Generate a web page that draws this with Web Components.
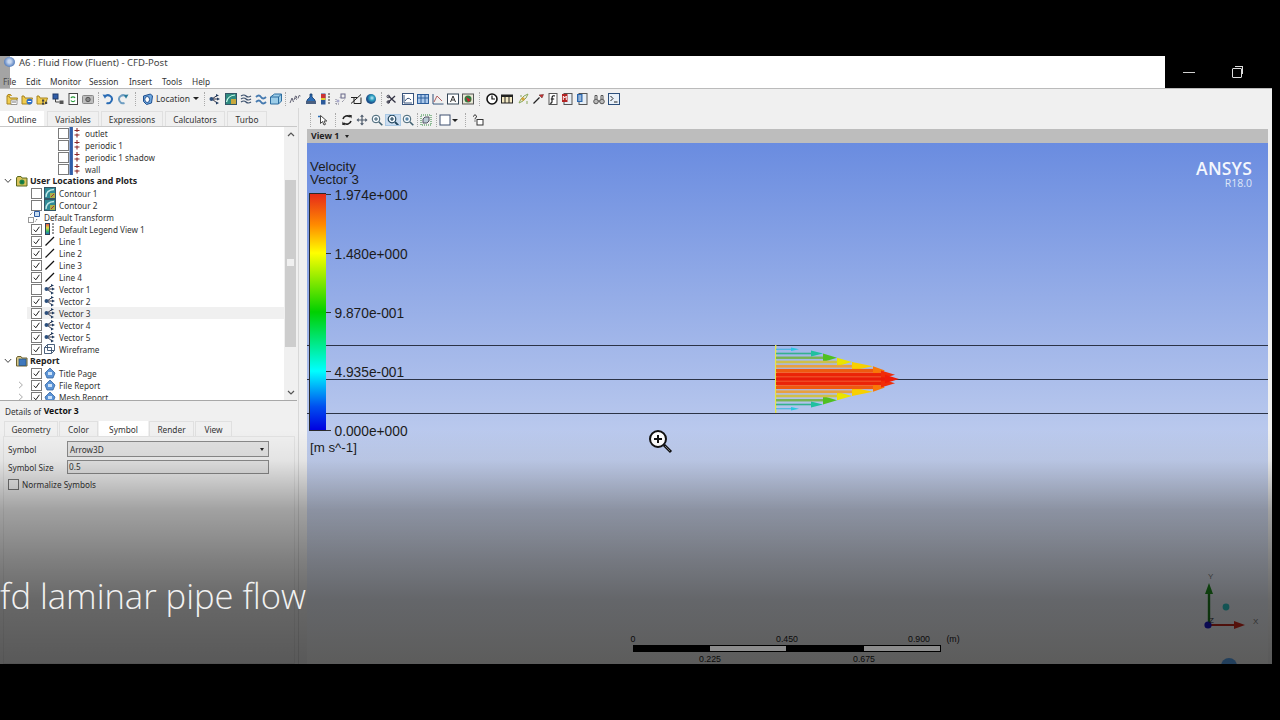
<!DOCTYPE html>
<html lang="en"><head><meta charset="utf-8"><title>CFD-Post</title>
<style>html,body{margin:0;padding:0;background:#000;overflow:hidden}</style></head>
<body>
<cfd-frame>
  <cfd-titlebar slot="title" title-text="A6 : Fluid Flow (Fluent) - CFD-Post"></cfd-titlebar>
  <cfd-maintools slot="tools"></cfd-maintools>
  <cfd-outline slot="left"></cfd-outline>
  <cfd-view slot="right"></cfd-view>
</cfd-frame>
<script>
const UI='"Noto Sans","Liberation Sans",sans-serif';
const doc=(c='#fff')=>`<rect x="2" y=".5" width="8" height="11" fill="${c}" stroke="#555"/>`;
const ICONS={
boundary:`<rect x=".5" y="0" width="3.4" height="12" fill="#2f5da8"/><path d="M5.5 3.5h5M5.5 8h5M8 1v4M8 6.5v4" stroke="#8c2a2a" stroke-width="1.1" fill="none"/>`,
contour:`<rect x=".5" y=".5" width="11" height="11" fill="#2f8a96" stroke="#356"/><path d="M2 10Q2 3 10 2.5" stroke="#bfe8e8" stroke-width="1.3" fill="none"/><rect x="6" y="6" width="5" height="5" fill="#a9b04a"/><path d="M7 10l3-3" stroke="#a33"/>`,
legend:`<rect x="1.5" y=".5" width="4" height="11" fill="url(#lg)" stroke="#345"/><defs><linearGradient id="lg" x2="0" y2="1"><stop stop-color="#e44"/><stop offset=".4" stop-color="#dd4"/><stop offset=".7" stop-color="#3b6"/><stop offset="1" stop-color="#26c"/></linearGradient></defs><path d="M8 1h2M8 4h2M8 7h2M8 10h2" stroke="#333" stroke-width="1.2"/>`,
line:`<path d="M1.5 10.5L10 2" stroke="#111" stroke-width="1.2" fill="none"/>`,
vector:`<path d="M3 6L8 2.5M3 6L8 6M3 6L8 10" stroke="#334" fill="none"/><circle cx="2.5" cy="6" r="2" fill="#2c4f7c"/><path d="M7 1l3 1.4-3 1.4zM8 4.6l3 1.4-3 1.4zM7 8.6l3 1.4-3 1.4z" fill="#1f3a5f"/>`,
wire:`<path d="M.5 4.5h7v6h-7zM.5 4.5l3-3h7v6l-3 3M3.5 1.5v6h7" stroke="#39506e" fill="none" stroke-width=".9"/>`,
report:`<path d="M1 6l5-5 5 5-2 5H3z" fill="#5b93d6" stroke="#35669f" stroke-width=".8"/><rect x="4" y="5" width="4" height="3" fill="#cfe3f7"/>`,
transform:`<path d="M.5 6.5h5v5h-5z" fill="none" stroke="#333" stroke-dasharray="1 1"/><path d="M6.5.5h5v5h-5z" fill="#c9ddf0" stroke="#2c5aa0"/><path d="M2 4L5 1M9 8l-2 3" stroke="#555" stroke-dasharray="1 1"/>`,
folderUser:`<path d="M.5 3V11h10.5V3H6L5 1.5H1.5z" fill="#d9c25a" stroke="#5b6a20"/><circle cx="6" cy="7" r="2.6" fill="#2f8d48"/><rect x="4.5" y="5.5" width="3" height="3" fill="#174"/>`,
folderRep:`<path d="M.5 3V11h10.5V3H6L5 1.5H1.5z" fill="#d7c789" stroke="#6c6130"/><rect x="3" y="4" width="7" height="6.5" fill="#3f78bd" stroke="#24507f" stroke-width=".7"/>`,
f1:`<path d="M1 3V11h8.5L11.5 5H4L3 3z" fill="#f1cd4e" stroke="#a78420"/><path d="M1 3l1-1.5h2.5L5.5 3" fill="#e8b93a" stroke="#a78420"/><path d="M5 7h6v4.5H5z" fill="#fff" stroke="#777" stroke-width=".7"/><path d="M6 9h4" stroke="#777"/>`,
f2:`<path d="M1 3V11h8.5L11.5 5H4L3 3z" fill="#f1cd4e" stroke="#a78420"/><circle cx="8.5" cy="8.5" r="3" fill="#2f6fc7"/><path d="M6.8 8.5h3.4" stroke="#fff"/>`,
f3:`<path d="M1 3V11h8.5L11.5 5H4L3 3z" fill="#f1cd4e" stroke="#a78420"/><rect x="6" y="6.5" width="2.2" height="2.2" fill="#444"/><rect x="9" y="8.8" width="2.2" height="2.2" fill="#444"/><rect x="6" y="9.6" width="2" height="2" fill="#444"/>`,
nodes:`<rect x="1" y="1" width="5" height="5" fill="#2f5da8" stroke="#1f3a6a"/><rect x="7.5" y="7.5" width="4" height="3.5" fill="#555"/><path d="M3.5 6v3h4" stroke="#444" fill="none"/>`,
refresh:`<rect x="2" y=".5" width="8.5" height="11" fill="#fff" stroke="#444"/><path d="M4 5a2.3 2.3 0 0 1 4 0M8 7.5a2.3 2.3 0 0 1-4 0" stroke="#2a9a3c" stroke-width="1.3" fill="none"/>`,
camera:`<rect x=".5" y="2.5" width="11" height="8" rx="1" fill="#bdbdbd" stroke="#888"/><circle cx="6" cy="6.5" r="2.2" fill="#888" stroke="#555"/>`,
undo:`<path d="M3 3.5a4 4 0 1 1 1.5 6.5" stroke="#2a6cb5" stroke-width="2" fill="none"/><path d="M.5 1.5l4.5.5-2 3.8z" fill="#2a6cb5"/>`,
redo:`<path d="M9 3.5a4 4 0 1 0-1.5 6.5" stroke="#6f9ec2" stroke-width="2" fill="none"/><path d="M11.5 1.5L7 2l2 3.8z" fill="#2a7a9a"/>`,
location:`<path d="M2.5 3l7-2 2 2-1 7-5 1.5-3-3z" fill="#6fa8e0" stroke="#1f4f8f"/><ellipse cx="6.2" cy="6.5" rx="2.4" ry="3" fill="#fff" stroke="#1f4f8f"/>`,
contour2:`<rect x=".5" y=".5" width="11" height="11" fill="#2e8a7f" stroke="#356"/><path d="M1.5 9Q3 2.5 10 2" stroke="#cfe" fill="none" stroke-width="1.2"/><rect x="6" y="6" width="5" height="5" fill="#c8a83c"/>`,
stream:`<path d="M1 3q3-2 5 0t5 0M1 6q3-2 5 0t5 0M1 9q3-2 5 0t5 0" stroke="#3a4f6c" fill="none" stroke-width="1.2"/>`,
ribbon:`<path d="M1 4q3-3 5 0t5 0M1 9q3-3 5 0t5 0" stroke="#467ab0" fill="none" stroke-width="1.8"/>`,
cube:`<path d="M.5 4l4-3h7v7l-3 3h-8z" fill="#9ccde8" stroke="#2c6da0"/><path d="M.5 4h8v7M8.5 4l3-3" stroke="#2c6da0" fill="none"/>`,
abc:`<path d="M1 10l2-5 1.5 4M5 7l1.5-4 1.5 1-1.5 1.5 1.5 1M9 5.5l1-3 1.5.5" stroke="#667" fill="none"/>`,
flask:`<path d="M5 1h2v3l3 3v3H2V7l3-3z" fill="#2b6cb5" stroke="#143a6a" stroke-width=".8"/><rect x="1" y="8" width="10" height="3" fill="#4a5f80"/>`,
legend2:`<rect x="1" y=".5" width="4.5" height="11" fill="#2b5a9a"/><rect x="1" y="1" width="4.5" height="4" fill="#c33"/><rect x="1" y="5" width="4.5" height="2" fill="#dc3"/><path d="M8 1h2M8 4h2M8 7h2M8 10h2" stroke="#333" stroke-width="1.2"/>`,
dots:`<path d="M1 11V5M1 11h4M5 4.5l1.5-1.5M7 9l3-3" stroke="#778" fill="none" stroke-dasharray="1 1"/><rect x="6" y="1" width="4" height="4" fill="none" stroke="#668"/><circle cx="3" cy="8" r="1.5" fill="#aac"/>`,
flag:`<path d="M1 10.5L11 1.5" stroke="#222"/><path d="M1 4.5h6M4 4.5v6h7V4.5" stroke="#222" fill="none"/>`,
ball:`<circle cx="6" cy="6" r="5" fill="url(#bb)"/><defs><radialGradient id="bb" cx=".6" cy=".4"><stop stop-color="#bfe8f5"/><stop offset=".5" stop-color="#2d9fc0"/><stop offset="1" stop-color="#1d4f8a"/></radialGradient></defs>`,
scissors:`<path d="M2 9.5L9 3M2.5 3l7 6.5" stroke="#334" stroke-width="1.3" fill="none"/><circle cx="2.3" cy="3.5" r="1.3" fill="none" stroke="#334"/><circle cx="2.3" cy="9" r="1.3" fill="none" stroke="#334"/>`,
graphbox:`<rect x=".5" y=".5" width="11" height="11" fill="#fff" stroke="#39547c"/><path d="M2 10V2M2 10h8M3 8q3-5 6-1" stroke="#39547c" fill="none"/>`,
table:`<rect x=".5" y="1.5" width="11" height="9" fill="#a9c7ea" stroke="#2d5e9b"/><path d="M4 1.5v9M8 1.5v9M.5 5h11" stroke="#2d5e9b"/>`,
chart:`<path d="M1 1v10h10.5" stroke="#35527a" fill="none"/><path d="M2 9L5 3l5 5" stroke="#b25f5f" fill="none"/><path d="M2 10.5h9" stroke="#9ab"/>`,
abox:`<rect x=".5" y="1" width="11" height="10" fill="#fff" stroke="#345"/><path d="M3.5 9L6 3l2.5 6M4.5 7h3" stroke="#333" fill="none"/>`,
photo:`<rect x=".5" y="1" width="11" height="10" fill="#e9e7d6" stroke="#555"/><circle cx="6" cy="6" r="3.5" fill="#2f7a3d"/><path d="M4 4l5 3-3 2z" fill="#c23"/>`,
clock:`<circle cx="6" cy="6" r="5" fill="#fff" stroke="#111" stroke-width="1.6"/><path d="M6 2.6V6h3" stroke="#111" stroke-width="1.2" fill="none"/>`,
film:`<rect x=".5" y="2" width="11" height="8" fill="#f3e9c4" stroke="#222"/><rect x=".5" y="2" width="11" height="2" fill="#222"/><path d="M4 4v6M8 4v6" stroke="#222"/>`,
star:`<path d="M2 10l2-4 3-3 4-2-2 4-3 3zM4 2v2M10 8v3" stroke="#8aa85a" fill="none"/><circle cx="6" cy="6" r="1.8" fill="#d4a63a"/>`,
probe:`<path d="M1.5 10.5l6-6" stroke="#222" stroke-width="1.3"/><path d="M7 2l3 3 1.5-3.5z" fill="#c33" stroke="#522" stroke-width=".5"/>`,
fdoc:`${doc()}<path d="M8 3C5 2 5 4 5 6v2.5C5 10 4 10.5 3 10M3.8 6h3.4" stroke="#111" stroke-width="1.1" fill="none"/>`,
mdoc:`${doc('#e6eef5')}<path d="M0 1h5.5v8H0z" fill="#b32424"/><path d="M1.3 7V3l1.5 2 1.5-2v4" stroke="#fff" fill="none" stroke-width=".9"/>`,
bdoc:`${doc('#e6eef5')}<path d="M0 1h5.5v8H0z" fill="#2a66ad"/><path d="M1.3 3h3M1.3 5h3M1.3 7h3" stroke="#fff"/>`,
bino:`<circle cx="3" cy="8.5" r="2.3" fill="#bbb" stroke="#555"/><circle cx="9" cy="8.5" r="2.3" fill="#bbb" stroke="#555"/><path d="M2 6V2.5h2V6M8 6V2.5h2V6M5 8h2" stroke="#555" fill="none"/>`,
term:`<rect x=".5" y=".5" width="11" height="11" fill="#e8f0f8" stroke="#2c4f7c"/><path d="M2.5 3l2.5 2.5L2.5 8M6 9h3.5" stroke="#222" fill="none"/>`,
pick:`<path d="M3.5 1.5v8l2-2 1.5 3.5 1.5-.7L7 7h2.8z" fill="#fff" stroke="#333" stroke-width=".9"/><path d="M1 2.5h2M2 1.5v2" stroke="#2a6cb5"/>`,
rotate:`<path d="M2 5a4.3 4.3 0 0 1 7-2M10 7a4.3 4.3 0 0 1-7 2" stroke="#222" stroke-width="1.6" fill="none"/><path d="M7.5 .8l3.4.4-.5 3.4zM4.5 11.2l-3.4-.4.5-3.4z" fill="#222"/>`,
pan:`<path d="M6 .5l2 2.2H6.6v2.7h2.7V4l2.2 2-2.2 2V6.6H6.6v2.7H8l-2 2.2-2-2.2h1.4V6.6H2.7V8L.5 6l2.2-2v1.4h2.7V2.7H4z" fill="#4d5a6b"/>`,
zoomin:`<circle cx="5" cy="5" r="3.8" fill="#f6fbff" stroke="#3f5f70"/><path d="M3 5h4M5 3v4" stroke="#3f5f70"/><path d="M8 8l3.3 3.3" stroke="#3f5f70" stroke-width="1.6"/>`,
zoombox:`<circle cx="5" cy="5" r="3.8" fill="#f6fbff" stroke="#23475f" stroke-width="1.2"/><path d="M3 5h4M5 3v4" stroke="#23475f" stroke-width="1.2"/><path d="M8 8l3.3 3.3" stroke="#23475f" stroke-width="1.8"/>`,
zoomfit:`<circle cx="5" cy="5" r="3.8" fill="#f6fbff" stroke="#3f5f70"/><circle cx="5" cy="5" r="1.7" fill="#5a87a8"/><path d="M8 8l3.3 3.3" stroke="#3f5f70" stroke-width="1.6"/>`,
fitbox:`<rect x="1" y="1" width="10" height="10" fill="none" stroke="#2c8a3c" stroke-dasharray="1 1"/><path d="M3 5l2-2h4v4l-2 2H3z" fill="#b9c9d4" stroke="#556"/>`,
square:`<rect x="1" y="1" width="10" height="10" fill="#fff" stroke="#3f5070"/>`,
help:`<rect x="5" y="5.5" width="6" height="5.5" fill="#fff" stroke="#333"/><path d="M1.5 2.5a1.5 1.5 0 1 1 2.3 1.3c-.6.4-.8.7-.8 1.5M3 6.5v1" stroke="#111" fill="none"/>`,
};
function def(name,css,html,extra){
  class C extends HTMLElement{
    constructor(){super();this.attachShadow({mode:'open'}).innerHTML=`<style>${css}</style>`+(typeof html==='function'?html(this):html);}
    connectedCallback(){ if(extra) extra.call(this); }
  }
  customElements.define(name,C);
}
/* single icon */
class UiIcon extends HTMLElement{
  connectedCallback(){
    const s=this.getAttribute('size')||12;
    this.attachShadow({mode:'open'}).innerHTML=`<style>:host{display:inline-flex;align-items:center;justify-content:center;flex:none;width:var(--w,${s}px);height:${s}px}svg{display:block;overflow:visible}</style><svg width="${s}" height="${s}" viewBox="0 0 12 12">${ICONS[this.getAttribute('name')]||''}</svg>`;
  }
}
customElements.define('ui-icon',UiIcon);

/* frame */
def('cfd-frame',`:host{display:block;position:relative;width:1280px;height:720px;background:#000;overflow:hidden;font-family:${UI};font-size:8.2px;color:#333}
.col{display:flex;flex-direction:column;height:664px;padding-top:56px;box-sizing:border-box}
.work{flex:1;min-height:0;display:flex;width:1272px;background:#f0f0f0}
.tools{width:1272px}
.split{width:9px;flex:none;border-left:1px solid #d8d8d8;box-sizing:border-box}
.shade{position:absolute;left:0;top:430px;width:1272px;height:234px;pointer-events:none;
background:linear-gradient(180deg,rgba(0,0,0,0) 0,rgba(0,0,0,.05) 30px,rgba(0,0,0,.33) 80px,rgba(0,0,0,.47) 130px,rgba(0,0,0,.57) 170px,rgba(0,0,0,.63) 234px)}
.cap{position:absolute;left:0;top:572px;font:300 34.6px/48px "Open Sans",sans-serif;color:#f2f2f2;white-space:nowrap}
.rw{position:absolute;top:646px;height:5px;width:76px;background:#8c8c8c}
.left{flex:none;width:298px}.right{flex:1;min-width:0}
::slotted([slot=left]){width:298px}
`,`<div class="col"><slot name="title"></slot><div class="tools"><slot name="tools"></slot></div>
<div class="work"><div class="left"><slot name="left"></slot></div><div class="split"></div><div class="right"><slot name="right"></slot></div></div></div>
<div class="shade"></div><div class="rw" style="left:710px"></div><div class="rw" style="left:864px"></div><div class="cap">fd laminar pipe flow</div>`);

/* title bar */
def('cfd-titlebar',`:host{display:flex;height:32px;flex:none;color:#444}
.w{width:1165px;background:#fff;display:flex;flex-direction:column;position:relative;font-size:9.55px}
.t{height:13px;display:flex;align-items:center;padding-left:19px;line-height:13px;white-space:nowrap}
.m{display:flex;margin-top:5px;height:14px;align-items:center;font-size:8.3px;padding-left:3px;color:#333}
.m span{display:block}
.mark{position:absolute;left:0;top:0;width:10px;height:32px;background:rgba(90,90,90,.55)}
.g{position:absolute;left:4px;top:1px;width:11px;height:10px;border-radius:50%;background:radial-gradient(circle at 50% 45%,#c9d8ef 0 20%,#6a8fc8 60%,#355d99 100%)}
.b{flex:1;display:flex;background:#000;position:relative}
.min{width:12px;height:1px;background:#d0d0d0;margin:16px 0 0 18px}
.res{width:8px;height:8px;border:1px solid #ddd;margin:12px 0 0 37px;position:relative;border-radius:1px}
.res:before{content:"";position:absolute;left:1.5px;top:-3px;width:7px;height:7px;border:1px solid #ddd;border-left:0;border-bottom:0;}
`,t=>`<div class="w"><div class="mark"></div><div class="g"></div><div class="t">${t.getAttribute('title-text')}</div>
<div class="m"><span style="width:23px">File</span><span style="width:24px">Edit</span><span style="width:39px">Monitor</span><span style="width:40px">Session</span><span style="width:33px">Insert</span><span style="width:30px">Tools</span><span>Help</span></div></div>
<div class="b"><div class="min"></div><div class="res"></div></div>`);

/* toolbars */
const ti=(names)=>names.map(n=>`<ui-icon name="${n}" style="--w:15.2px"></ui-icon>`).join('');
def('cfd-maintools',`:host{display:flex;height:20px;align-items:center;background:#f0f0f0;border-top:1px solid #bbb;box-sizing:border-box;padding-left:4.4px;white-space:nowrap;font-size:8.5px;color:#333}
.sep{width:1px;height:14px;flex:none;border-left:1px dotted #aaa;box-sizing:border-box}
.loc{display:flex;align-items:center}
.arr{width:0;height:0;border:3px solid transparent;border-top:3.5px solid #222;border-bottom:0}
`,`${ti(['f1','f2','f3','nodes','refresh','camera'])}<span class="sep" style="margin:0 2px"></span>${ti(['undo','redo'])}<span class="sep" style="margin:0 4px"></span>
<span class="loc"><ui-icon name="location" style="--w:14px"></ui-icon><span style="margin-left:2px;width:33px">Location</span><span class="arr" style="margin-left:4px"></span></span>
<span class="sep" style="margin:0 3px 0 5px"></span>${ti(['vector','contour2','stream','ribbon','cube'])}<span class="sep" style="margin:0 1.5px"></span>${ti(['abc','flask','legend2','dots','flag','ball'])}<span class="sep" style="margin:0 2.3px 0 2.5px"></span>${ti(['scissors','graphbox','table','chart','abox','photo'])}<span class="sep" style="margin:0 4.8px 0 3px"></span>${ti(['clock','film','star','probe','fdoc','mdoc','bdoc','bino','term'])}`);

/* tabs */
def('tab-strip',`:host{display:flex;height:15px;align-items:stretch}`,`<slot></slot>`);
def('tab-item',`:host{display:flex;align-items:center;justify-content:center;box-sizing:border-box;background:#f0f0f0;border:1px solid #e0e0e0;border-bottom:0;flex:none;color:#333;font-size:8.3px;margin-right:1px}
:host([active]){background:#fff;border-color:#fff}`,`<slot></slot>`,function(){this.style.width=this.getAttribute('w')+'px';if(this.hasAttribute('ml'))this.style.marginLeft=this.getAttribute('ml')+'px'});

/* tree row */
def('tree-row',`:host{display:flex;height:12px;align-items:center;white-space:nowrap;font-size:8.2px;color:#333;padding-left:14px}
:host([level="1"]){padding-left:1px;font-weight:700;color:#222;font-size:8.75px}
:host([level="3"]){padding-left:41px}
:host([selected]){background:linear-gradient(90deg,transparent 27px,#f0f0f0 27px)}
.c{width:13px;flex:none;height:12px}
.c svg{display:block;margin:2.5px 0 0 3px}
.x{width:11px;height:11px;box-sizing:border-box;border:1px solid #7b7b7b;background:#fff;flex:none;margin-left:4px;margin-right:2px;position:relative}
.x svg{position:absolute;left:0;top:0}
:host([level="3"]) .x{margin-right:0}
.l{margin-left:3px}
:host([level="3"]) .l{margin-left:4px}
:host([nocheck]) .c{width:14px}
:host([nocheck]) .l{margin-left:4px}
`,t=>{
 const lv=t.getAttribute('level');
 const chev=t.getAttribute('chev');
 const ch=chev==='open'?`<svg width="8" height="6" viewBox="0 0 8 6"><path d="M.8 1l3.2 3.4L7.2 1" fill="none" stroke="#444" stroke-width="1"/></svg>`:chev==='closed'?`<svg width="6" height="8" viewBox="0 0 6 8" style="margin-left:4px;margin-top:2px"><path d="M1 .8l3.4 3.2L1 7.2" fill="none" stroke="#aaa"/></svg>`:'';
 const cb=t.hasAttribute('nocheck')||lv==='1'?'':`<span class="x">${t.hasAttribute('checked')?'<svg width="9" height="9" viewBox="0 0 9 9"><path d="M1.8 4.6l2 2.2 3.6-5" fill="none" stroke="#222"/></svg>':''}</span>`;
 return `<span class="c">${ch}</span>${lv==='1'?'<span style="width:2px"></span>':''}${cb}<ui-icon name="${t.getAttribute('icon')}"></ui-icon><span class="l"${lv==='1'?' style="margin-left:2px"':''}><slot></slot></span>`;
});

/* outline */
const rows=[
['3','boundary','outlet',0],['3','boundary','periodic 1',0],['3','boundary','periodic 1 shadow',0],['3','boundary','wall',0],
['1','folderUser','User Locations and Plots','open'],
['2','contour','Contour 1',0],['2','contour','Contour 2',0],['2','transform','Default Transform','nc'],['2','legend','Default Legend View 1',1],
['2','line','Line 1',1],['2','line','Line 2',1],['2','line','Line 3',1],['2','line','Line 4',1],
['2','vector','Vector 1',0],['2','vector','Vector 2',1],['2','vector','Vector 3',1,'sel'],['2','vector','Vector 4',1],['2','vector','Vector 5',1],['2','wire','Wireframe',1],
['1','folderRep','Report','open'],['2','report','Title Page',1],['2','report','File Report',1,'closed'],['2','report','Mesh Report',1,'closed']];
def('cfd-outline',`:host{display:flex;flex-direction:column;height:556px;background:#f0f0f0;overflow:hidden}
.tabs{padding-top:3px}
.tree{height:273px;background:#fff;border-top:1px solid #c8c8c8;border-bottom:1px solid #a8a8a8;display:flex;box-sizing:content-box;flex:none;width:297px}
.list{flex:1;overflow:hidden;min-width:0}
.sb{width:13px;flex:none;background:#f0f0f0;position:relative;display:flex;flex-direction:column;align-items:center}
.au{height:53px;flex:none;display:flex;justify-content:center;padding-top:5px;box-sizing:border-box}
.th{width:11px;height:167px;background:#cdcdcd;flex:none;display:flex;align-items:flex-start;justify-content:center}
.gr{width:7px;height:7px;background:#f0f0f0;margin-top:79px}
.ad{flex:1;display:flex;justify-content:center;align-items:flex-end;padding-bottom:5px}
`,`<div class="tabs"><tab-strip><tab-item w="44" active>Outline</tab-item><tab-item w="52" ml="2">Variables</tab-item><tab-item w="62" ml="1">Expressions</tab-item><tab-item w="60" ml="1">Calculators</tab-item><tab-item w="40" ml="1">Turbo</tab-item></tab-strip></div>
<div class="tree"><div class="list">${rows.map(r=>`<tree-row level="${r[0]}" icon="${r[1]}" ${r[3]===1||r[4]==='sel'||r[4]==='closed'?'checked':''} ${r[3]==='nc'?'nocheck':''} ${r[3]==='open'?'chev="open"':''} ${r[4]==='closed'?'chev="closed"':''} ${r[4]==='sel'?'selected':''}>${r[2]}</tree-row>`).join('')}</div>
<div class="sb"><div class="au"><svg width="8" height="5" viewBox="0 0 8 5"><path d="M1 4l3-3 3 3" fill="none" stroke="#555" stroke-width="1.2"/></svg></div><div class="th"><div class="gr"></div></div><div class="ad"><svg width="8" height="5" viewBox="0 0 8 5"><path d="M1 1l3 3 3-3" fill="none" stroke="#555" stroke-width="1.2"/></svg></div></div></div>
<cfd-details></cfd-details>`);

/* details */
def('cfd-details',`:host{display:flex;flex-direction:column;flex:1;background:#f0f0f0;font-size:8.2px;color:#333;padding:0 0 0 3px}
.h{height:20px;display:flex;align-items:center;padding-left:2px;box-sizing:border-box}
b{color:#111;margin-left:2.5px;font-size:8.6px}
.tabs{padding-left:1px;height:15px}
.body{flex:1;border:1px solid #e2e2e2;width:292px;box-sizing:border-box;padding:4px 0 0 4px;background:#f0f0f0}
.row{display:flex;align-items:center}
.lab{width:59px;flex:none}
.sel{width:202px;height:16px;box-sizing:border-box;border:1px solid #8a8a8a;background:#e2e2e2;display:flex;align-items:center;justify-content:space-between;padding:0 4px 0 2px}
.sel i{display:block;width:0;height:0;border:2.5px solid transparent;border-top:3px solid #222;border-bottom:0}
.inp{width:202px;height:14px;box-sizing:border-box;border:1px solid #8a8a8a;background:#e6e6e6;padding-left:1px;line-height:12px;margin-top:3px}
.chk{display:flex;align-items:center;margin-top:5px;margin-left:0}
.chk i{display:block;width:11px;height:11px;box-sizing:border-box;border:1px solid #777;background:#f4f4f4;margin-right:3px}
`,`<div class="h">Details of <b>Vector 3</b></div>
<div class="tabs"><tab-strip><tab-item w="54">Geometry</tab-item><tab-item w="39">Color</tab-item><tab-item w="49" active>Symbol</tab-item><tab-item w="45">Render</tab-item><tab-item w="37">View</tab-item></tab-strip></div>
<div class="body"><div class="row"><span class="lab">Symbol</span><span class="sel">Arrow3D<i></i></span></div>
<div class="row"><span class="lab" style="margin-top:3px">Symbol Size</span><span class="inp">0.5</span></div>
<div class="chk"><i></i>Normalize Symbols</div></div>`);

/* view */
def('cfd-view',`:host{display:flex;flex-direction:column;height:556px;padding-right:4px;background:#f0f0f0;font-size:8.6px}
.tb{height:21px;flex:none;display:flex;align-items:center;padding-left:3px;box-sizing:border-box;padding-top:3px}
.sep{width:1px;height:14px;flex:none;border-left:1px dotted #aaa;box-sizing:border-box}
.hl{background:#c9dcf0;outline:1px solid #a9c8e4;outline-offset:-1px;display:inline-flex}
.arr{width:0;height:0;border:3px solid transparent;border-top:3.5px solid #222;border-bottom:0;margin-left:0}
.vb{height:14px;flex:none;background:#bdbdbd;font-weight:700;color:#222;display:flex;align-items:center;padding-left:4px;font-size:8.8px}
.vb i{display:block;width:0;height:0;border:2.5px solid transparent;border-top:3px solid #222;border-bottom:0;margin-left:6px}
cfd-canvas{flex:1;min-height:0}
`,`<div class="tb"><span class="sep" style="margin-right:4px"></span><ui-icon name="pick" style="--w:15px"></ui-icon><span class="sep" style="margin:0 3px 0 5px"></span>
${['rotate','pan','zoomin'].map(n=>`<ui-icon name="${n}" style="--w:15.4px"></ui-icon>`).join('')}<span class="hl"><ui-icon name="zoombox" style="--w:15.4px"></ui-icon></span><ui-icon name="zoomfit" style="--w:15.4px"></ui-icon><span class="sep" style="margin:0 1px"></span><ui-icon name="fitbox" style="--w:15px"></ui-icon><span class="sep" style="margin:0 2px"></span><ui-icon name="square" style="--w:13px"></ui-icon><span class="arr"></span><span class="sep" style="margin:0 6px 0 7px"></span><ui-icon name="help" style="--w:13px"></ui-icon></div>
<div class="vb">View 1<i></i></div><cfd-canvas></cfd-canvas>`);

/* canvas */
function plot(){
  const L=[124,120,110,98,77,62,48,24];let s='';
  const shaft=['#e81c08','#ea2408','#ee5a10','#e8a040','#cfc048','#78b450','#34b090','#3ab4e0'];
  const head=['#ee1c08','#f02c08','#f87808','#f8d000','#eae400','#50c020','#20c0a0','#28c8e0'];
  const A=[14,14,12,21,15,14,12,8],H=[4.2,4.2,4.25,4.25,4.25,4.25,3,1.8],B=[3.4,3.4,3.2,2.8,2.6,2.4,1.6,1];
  const draw=(k,sg)=>{const y=34+sg*k*4.25,l=L[k],a=A[k],h=H[k],b=B[k];
    s+=`<rect x="1" y="${y-b/2}" width="${l-a+1}" height="${b}" fill="${shaft[k]}"/>`;
    s+=`<path d="M${l-a} ${y-h}L${l} ${y}L${l-a} ${y+h}z" fill="${head[k]}"/>`;};
  for(let k=7;k>=1;k--){draw(k,-1);draw(k,1);}draw(0,1);
  return `<svg width="128" height="70" viewBox="0 0 128 70" style="display:block"><rect x="1" y="25" width="108" height="18" fill="#f06a3a"/><rect x="0" y="0" width="1.4" height="68" fill="#e6e64e"/>${s}</svg>`;
}
def('cfd-canvas',`:host{display:block;position:relative;overflow:hidden;background:linear-gradient(180deg,#6a8ce0 0,#fafaf8 100%);font-family:"Liberation Sans",Arial,sans-serif;color:#1c1c1c}
.a{position:absolute;white-space:nowrap}
.hl{left:0;right:0;height:1px;background:#2b3346}
.bar{left:2px;top:50px;width:17px;height:238px;box-sizing:border-box;border:1px solid #2a2a2a;border-right:0;background:linear-gradient(180deg,#e62a1a 0,#ff8a00 13%,#ffff00 25%,#00d000 50%,#00ffff 75%,#0050f0 90%,#0000e0 100%)}
.tick{left:19px;width:5px;height:1px;background:#333}
.lg{left:27.5px;font-size:13.75px;line-height:16px}
.t{left:3px;font-size:13.3px;line-height:14px}
.an{right:16px;top:16px;font:600 17.5px/18px "Open Sans",sans-serif;color:#f4f7fd;letter-spacing:.2px}
.r18{right:16px;top:34.5px;font:400 10.5px/11px "Open Sans",sans-serif;color:#dfe7f7}
.rl{font-size:8.8px;line-height:10px;color:#222;transform:translateX(-50%)}
.seg{top:502px;height:7px;box-sizing:border-box;border:1px solid #000}
`,()=>{
 const tick=(y,txt)=>`<div class="a tick" style="top:${y}px"></div><div class="a lg" style="top:${y-6}px">${txt}</div>`;
 return `<div class="a hl" style="top:202px"></div><div class="a hl" style="top:236px"></div><div class="a hl" style="top:270px"></div>
 <div class="a t" style="top:17px">Velocity</div><div class="a t" style="top:30px">Vector 3</div>
 <div class="a bar"></div>${tick(51,'1.974e+000')}${tick(110,'1.480e+000')}${tick(169,'9.870e-001')}${tick(228,'4.935e-001')}${tick(287,'0.000e+000')}
 <div class="a t" style="top:298px">[m s^-1]</div>
 <div class="a" style="left:468px;top:202px">${plot()}</div>
 <div class="a an">ANSYS</div><div class="a r18">R18.0</div>
 <svg class="a" style="left:338px;top:284px" width="30" height="28" viewBox="0 0 30 28"><path d="M19 18l7 7" stroke="#111" stroke-width="3"/><path d="M20 19l5 5" stroke="#777" stroke-width="1"/><circle cx="13" cy="12" r="8" fill="#fff" stroke="#111" stroke-width="2"/><path d="M9 12h8M13 8v8" stroke="#111" stroke-width="2"/></svg>
 <svg class="a" style="left:880px;top:425px" width="81" height="96" viewBox="0 0 81 96"><path d="M22 57V23" stroke="#1f7a1f" stroke-width="2.4"/><path d="M22 15l4 11h-8z" fill="#1f8a1f"/><path d="M22 57h27" stroke="#c0281c" stroke-width="2"/><path d="M58 57l-11-4v8z" fill="#d02a1c"/><circle cx="39" cy="39" r="3.4" fill="#2fc4c4"/><circle cx="21" cy="57" r="3.6" fill="#1818c8"/><circle cx="42" cy="98" r="8" fill="#5aa8f5"/></svg>
 <div class="a" style="left:901px;top:429px;font-size:8px;color:#777">Y</div><div class="a" style="left:946px;top:474px;font-size:8px;color:#777">X</div><div class="a" style="left:902px;top:473px;font-size:8px;color:#334">Z</div>
 <div class="a rl" style="left:326px;top:491px">0</div><div class="a rl" style="left:480px;top:491px">0.450</div><div class="a rl" style="left:612px;top:491px">0.900</div><div class="a rl" style="left:646px;top:491px">(m)</div>
 <div class="a seg" style="left:326px;width:77px;background:#000"></div><div class="a seg" style="left:403px;width:77px;background:#fff;border-left:0"></div><div class="a seg" style="left:480px;width:77px;background:#000"></div><div class="a seg" style="left:557px;width:77px;background:#fff;border-left:0"></div>
 <div class="a rl" style="left:403px;top:511px">0.225</div><div class="a rl" style="left:557px;top:511px">0.675</div>`;
});
</script>
</body></html>
